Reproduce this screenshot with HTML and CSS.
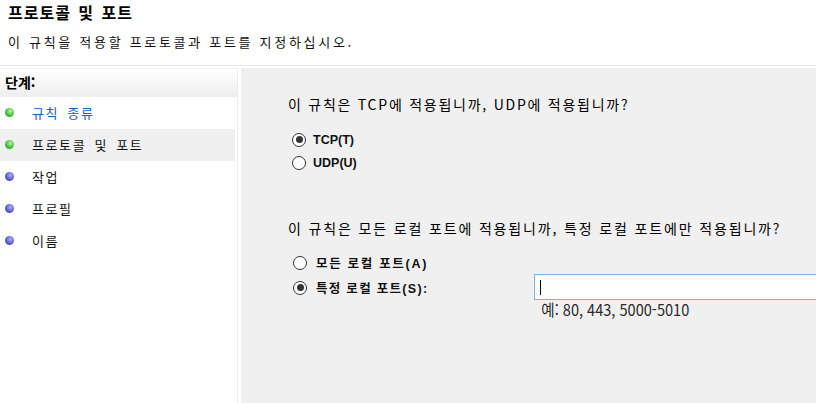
FILE: index.html
```html
<!DOCTYPE html>
<html lang="ko">
<head>
    <meta charset="UTF-8">
    <meta name="viewport" content="width=device-width, initial-scale=1.0">
    <title>프로토콜 및 포트</title>
    <link rel="stylesheet" href="styles.css">
</head>
<body>
    <div class="header">
        <h1>프로토콜 및 포트</h1>
        <p>이 규칙을 적용할 프로토콜과 포트를 지정하십시오.</p>
    </div>
    <div class="wizard">
        <div class="steps">
            <div class="steps-title">단계:</div>
            <ul>
                <li class="done link"><i class="dot"></i>규칙 종류</li>
                <li class="done on"><i class="dot"></i>프로토콜 및 포트</li>
                <li><i class="dot"></i>작업</li>
                <li><i class="dot"></i>프로필</li>
                <li><i class="dot"></i>이름</li>
            </ul>
        </div>
        <div class="panel">
            <p class="question">이 규칙은 TCP에 적용됩니까, UDP에 적용됩니까?</p>
            <div class="radios">
                <label class="radio"><span class="mark checked"></span><b>TCP(T)</b></label>
                <label class="radio"><span class="mark"></span><b>UDP(U)</b></label>
            </div>
            <p class="question q2">이 규칙은 모든 로컬 포트에 적용됩니까, 특정 로컬 포트에만 적용됩니까?</p>
            <div class="radios ports">
                <label class="radio"><span class="mark"></span><b>모든 로컬 포트(A)</b></label>
                <div class="port-row">
                    <label class="radio"><span class="mark checked"></span><b>특정 로컬 포트(S):</b></label>
                    <div class="port-input">
                        <div class="textbox"><span class="caret"></span></div>
                        <div class="hint">예: 80, 443, 5000-5010</div>
                    </div>
                </div>
            </div>
        </div>
    </div>
</body>
</html>
```

FILE: styles.css
```css
*{box-sizing:border-box;margin:0;padding:0;}
body{width:816px;height:403px;overflow:hidden;background:#fff;color:#000;font-family:'Noto Sans CJK KR','Liberation Sans',sans-serif;font-size:13px;}
.header{height:66px;padding:2px 0 0 8px;border-bottom:1px solid #e8e8e8;}
.header h1{font-size:16px;line-height:20px;font-weight:bold;letter-spacing:1px;word-spacing:2px;}
.header p{margin-top:11px;line-height:18px;letter-spacing:2.7px;color:#111;}
.wizard{display:flex;height:337px;padding-top:2px;}
.steps{width:238px;border-right:1px solid #ececec;border-top:1px solid #f2f2f2;}
.steps-title{height:28px;padding:3px 0 0 5px;font-weight:bold;font-size:14px;line-height:20px;background:linear-gradient(#fff,#eeeeee);}
.steps ul{list-style:none;}
.steps li{display:flex;align-items:center;height:31.8px;padding-left:5px;margin-right:2px;letter-spacing:1.6px;word-spacing:3px;color:#111;}
.steps li.on{background:#f0f0f0;}
.steps li.link{color:#0a64c8;}
.dot{display:inline-block;width:9px;height:9px;margin-right:18px;border-radius:50%;background:radial-gradient(circle at 60% 35%,#b0b0ff,#5a5ad0 55%,#3a3aa0);}
.done .dot{background:radial-gradient(circle at 60% 35%,#b8f5a0,#3fbf3a 55%,#2a8a2a);}
.panel{flex:1;margin-left:3px;background:#f0f0f0;padding:26px 0 0 47px;}
.question{line-height:20px;font-size:14px;letter-spacing:1.75px;}
.radios{margin-top:14px;padding-left:4px;}
.radio{display:flex;align-items:center;height:23px;}
.radio b{font-family:'Liberation Sans','Noto Sans CJK KR',sans-serif;font-size:12.5px;color:#111;}
.mark{width:14px;height:14px;margin-right:7px;border:1px solid #333;border-radius:50%;background:#fff;display:flex;align-items:center;justify-content:center;}
.mark.checked::after{content:'';width:7px;height:7px;border-radius:50%;background:#333;}
.q2{margin-top:44px;letter-spacing:1.85px;}
.ports{margin-top:12px;padding-left:5px;}
.ports .radio{height:25px;}
.ports .radio b{letter-spacing:1.7px;}
.ports .radio .mark{margin-right:9px;}
.port-row{display:flex;align-items:flex-start;}
.port-row .radio{width:241px;}
.port-row .radio b{letter-spacing:1.3px;}
.port-input{flex:1;}
.textbox{height:26px;margin-top:-1px;border:1px solid #7ab3e6;border-right:none;background:#fff;padding:5px 0 0 5px;}
.caret{display:block;width:1px;height:15px;background:#000;}
.hint{padding-left:8px;font-size:16px;line-height:18px;color:#2a2a2a;transform:scaleX(0.91);transform-origin:left;}
```
